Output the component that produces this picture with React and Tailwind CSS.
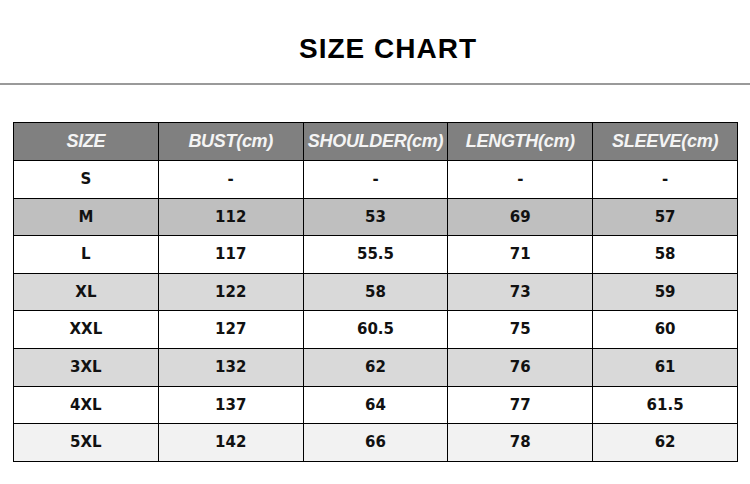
import React from 'react';

const headers = ['SIZE', 'BUST(cm)', 'SHOULDER(cm)', 'LENGTH(cm)', 'SLEEVE(cm)'];

const rows = [
    { size: 'S', vals: ['-', '-', '-', '-'], bg: 'bg-white' },
    { size: 'M', vals: ['112', '53', '69', '57'], bg: 'bg-[#bfbfbf]' },
    { size: 'L', vals: ['117', '55.5', '71', '58'], bg: 'bg-white' },
    { size: 'XL', vals: ['122', '58', '73', '59'], bg: 'bg-[#d9d9d9]' },
    { size: 'XXL', vals: ['127', '60.5', '75', '60'], bg: 'bg-white' },
    { size: '3XL', vals: ['132', '62', '76', '61'], bg: 'bg-[#d9d9d9]' },
    { size: '4XL', vals: ['137', '64', '77', '61.5'], bg: 'bg-white' },
    { size: '5XL', vals: ['142', '66', '78', '62'], bg: 'bg-[#f2f2f2]' },
];

const App = () => {
    return (
        <div className="w-[750px] h-[484px] bg-white overflow-hidden">
            <div className="h-[85px] border-b-2 border-[#9a9a9a] flex items-center justify-center pl-[26px] pt-[15px]">
                <h1 className="text-[28px] font-bold tracking-[1px] text-black font-['Liberation_Sans',sans-serif]">
                    SIZE CHART
                </h1>
            </div>

            <table className="mt-[37px] ml-[13px] w-[725px] border-collapse table-fixed">
                <thead>
                    <tr className="bg-[#808080] h-[38px]">
                        {headers.map(h => (
                            <th
                                key={h}
                                className="border border-black p-0 text-[18px] font-bold italic text-[#f4f4f4] font-['Liberation_Sans',sans-serif] tracking-[-0.3px]"
                            >
                                {h}
                            </th>
                        ))}
                    </tr>
                </thead>
                <tbody>
                    {rows.map(r => (
                        <tr key={r.size} className={`${r.bg} h-[37.6px]`}>
                            {[r.size, ...r.vals].map((v, i) => (
                                <td
                                    key={i}
                                    className="border border-black p-0 text-center text-[15px] font-bold text-[#111] font-['DejaVu_Sans',sans-serif]"
                                >
                                    {v}
                                </td>
                            ))}
                        </tr>
                    ))}
                </tbody>
            </table>
        </div>
    );
};

export default App;
